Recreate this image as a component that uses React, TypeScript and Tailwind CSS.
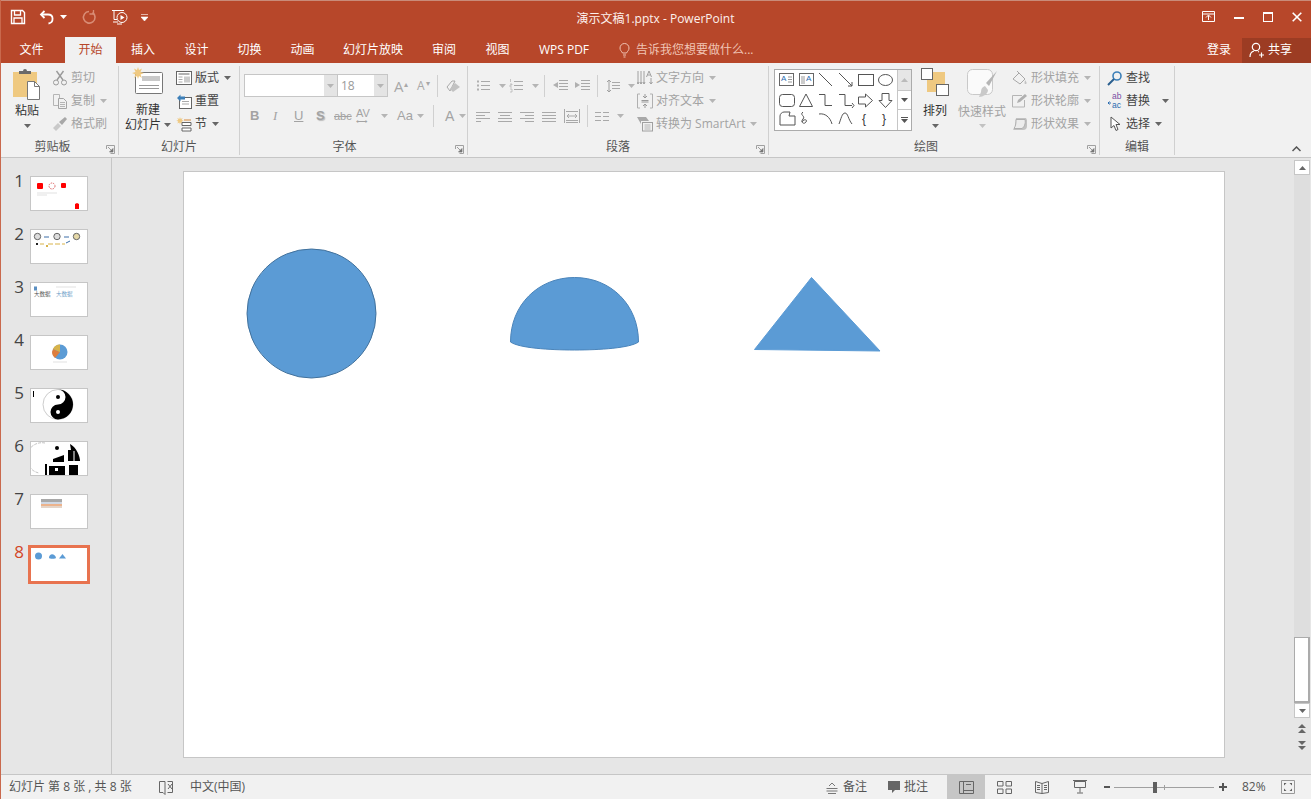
import type { ReactNode } from "react";

const GRAY = "#a9a9a9";
const DARK = "#5f5f5f";

function Caret({ color = "#666", className = "" }: { color?: string; className?: string }) {
  return (
    <svg width="7" height="4" viewBox="0 0 7 4" className={"shrink-0 " + className}>
      <path d="M0 0h7L3.5 4z" fill={color} />
    </svg>
  );
}

function Launcher() {
  return (
    <svg width="9" height="9" viewBox="0 0 9 9" className="shrink-0">
      <path d="M.5 4V.5H8.5V8.5H4.5" fill="none" stroke="#a0a0a0" />
      <path d="M2 2l4.5 4.5M7 3.5V7H3.5z" fill="#777" stroke="#777" strokeWidth=".7" />
    </svg>
  );
}

function Tab({ w, active, children }: { w: string; active?: boolean; children: ReactNode }) {
  return (
    <div
      className={
        w + " h-full flex items-center justify-center " + (active ? "bg-[#f1f1f1] text-[#b7472a]" : "text-white")
      }
    >
      {children}
    </div>
  );
}

function Group({ w, label, labelPad = "", launcher, children }: { w: string; label: string; labelPad?: string; launcher?: boolean; children: ReactNode }) {
  return (
    <div className={w + " shrink-0 h-[89px] mt-[3px] border-r border-[#d0d0d0] flex flex-col"}>
      <div className="flex h-[70px]">{children}</div>
      <div className={"flex-1 flex items-center relative justify-center text-[#555] pt-[3px] " + labelPad}>
        {label}
        {launcher && (
          <span className="absolute right-[3px] bottom-[1px]">
            <Launcher />
          </span>
        )}
      </div>
    </div>
  );
}

function Row({ icon, label, off, caret }: { icon: ReactNode; label: string; off?: boolean; caret?: boolean }) {
  return (
    <div className={"h-[23px] flex items-center whitespace-nowrap gap-[3px] " + (off ? "text-[#a3a3a3]" : "text-[#444]")}>
      {icon}
      <span>{label}</span>
      {caret && <Caret color={off ? "#b5b5b5" : "#666"} className="ml-[2px]" />}
    </div>
  );
}

function Ico({ w = 16, h = 16, children }: { w?: number; h?: number; children: ReactNode }) {
  return (
    <svg width={w} height={h} viewBox={"0 0 " + w + " " + h} fill="none" className="shrink-0">
      {children}
    </svg>
  );
}

function Lines({ ys, x1, x2, c = GRAY }: { ys: number[]; x1: number; x2: number; c?: string }) {
  return (
    <>
      {ys.map((y) => (
        <path key={y} d={"M" + x1 + " " + y + ".5H" + x2} stroke={c} />
      ))}
    </>
  );
}

function Sep() {
  return <div className="w-px h-[22px] bg-[#d0d0d0] shrink-0" />;
}

function Thumb({ n, selected, children }: { n: number; selected?: boolean; children: ReactNode }) {
  return (
    <div className={"flex items-start " + (selected ? "h-[39px] mt-[-2px]" : "h-[35px] mb-[18px]")}>
      <div className={"w-[27px] pr-[4px] text-right text-[17px] leading-[17px] " + (selected ? "text-[#d24726] mt-[-2px]" : "text-[#444] mt-[-4px]")}>
        {n}
      </div>
      <div className={selected ? "w-[62px] h-[39px] border-[3px] border-[#e8734f] bg-white" : "ml-[2px] w-[58px] h-[35px] border border-[#c6c6c6] bg-white"}>
        <svg width="56" height="33" viewBox="0 0 56 33" className="block">
          {children}
        </svg>
      </div>
    </div>
  );
}

export default function App() {
  return (
    <div className="h-screen w-full overflow-hidden flex flex-col bg-[#e6e6e6] border-l border-[#c9694d] text-[12px] leading-[16px] font-['Open_Sans','Noto_Sans_CJK_SC',sans-serif]">
      {/* title bar */}
      <div className="h-[37px] shrink-0 bg-[#b7472a] flex items-center text-white border-t border-[#c98b79]">
        <div className="w-[280px] flex items-center pl-[9px] mb-[4px]">
          <Ico w={16} h={16}>
            <path d="M1.5 1.5h11l2 2v11h-13z" stroke="#fff" strokeWidth="1.4" />
            <path d="M4.5 2v4h6V2M4 14v-5h8v5" stroke="#fff" strokeWidth="1.3" />
          </Ico>
          <div className="ml-[13px]">
            <Ico w={16} h={16}>
              <path d="M5.5 2L2 5.5 5.5 9" stroke="#fff" strokeWidth="1.8" />
              <path d="M2.5 5.5H9c6 0 6 8 .5 9" stroke="#fff" strokeWidth="1.8" />
            </Ico>
          </div>
          <Caret color="#fff" className="ml-[5px]" />
          <div className="ml-[14px]">
            <Ico w={16} h={16}>
              <path d="M11.5 3.5A5.8 5.8 0 1 1 8 2.5" stroke="#d98d76" strokeWidth="1.6" />
              <path d="M12.5 1v4h-4" stroke="#d98d76" strokeWidth="1.3" />
            </Ico>
          </div>
          <div className="ml-[15px]">
            <Ico w={17} h={17}>
              <path d="M0 1.5h12M2 1.5v9h3M6 13H1M5 15h5" stroke="#fff" />
              <circle cx="10" cy="8.5" r="5" stroke="#fff" />
              <path d="M8.5 6l4 2.5-4 2.5z" fill="#fff" />
            </Ico>
          </div>
          <svg width="7" height="7" viewBox="0 0 7 7" className="ml-[12px]">
            <path d="M0 .5h7M0 3h7L3.5 7z" stroke="#fff" strokeWidth=".6" fill="#fff" />
          </svg>
        </div>
        <div className="flex-1 text-center text-[#fdf1ed] pr-[172px] whitespace-nowrap">演示文稿1.pptx - PowerPoint</div>
        <div className="flex items-center mb-[5px] pr-[9px]">
          <Ico w={13} h={11}>
            <path d="M.5.5h12v10H.5zM.5 3h12" stroke="#fff" />
            <path d="M6.5 9V4.5M4 6.5l2.5-2.5L9 6.5" stroke="#fff" />
          </Ico>
          <div className="w-[10px] h-[2px] bg-white ml-[19px] mt-[3px]" />
          <div className="w-[10px] h-[10px] border border-white border-t-[2px] ml-[19px]" />
          <svg width="10" height="10" viewBox="0 0 10 10" className="ml-[19px]">
            <path d="M.7.7l8.6 8.6M9.3.7L.7 9.3" stroke="#fff" strokeWidth="1.6" />
          </svg>
        </div>
      </div>

      {/* tabs */}
      <div className="h-[26px] shrink-0 bg-[#b7472a] flex items-center text-white">
        <Tab w="w-[64px] pr-[3px]">文件</Tab>
        <Tab w="w-[51px]" active>开始</Tab>
        <Tab w="w-[54px]">插入</Tab>
        <Tab w="w-[53px]">设计</Tab>
        <Tab w="w-[53px]">切换</Tab>
        <Tab w="w-[53px]">动画</Tab>
        <Tab w="w-[88px]">幻灯片放映</Tab>
        <Tab w="w-[54px]">审阅</Tab>
        <Tab w="w-[53px]">视图</Tab>
        <Tab w="w-[80px]">WPS PDF</Tab>
        <div className="flex items-center ml-[15px] text-[#f0c4b4] whitespace-nowrap">
          <svg width="11" height="15" viewBox="0 0 11 15" fill="none" className="mr-[6px]">
            <path d="M3.5 10C2.5 8 1 7.5 1 5a4.5 4.5 0 0 1 9 0c0 2.5-1.5 3-2.5 5zM4 12h3M4.5 14h2" stroke="#f0c4b4" />
          </svg>
          告诉我您想要做什么...
        </div>
        <div className="flex-1" />
        <div className="text-white mr-[11px]">登录</div>
        <div className="w-[69px] h-[25px] bg-[#9c3c23] flex items-center pl-[7px] gap-[3px] text-white">
          <Ico w={16} h={16}>
            <circle cx="7" cy="5" r="3.7" stroke="#fff" strokeWidth="1.2" />
            <path d="M1 15c0-4 2-5.5 4-6M9 9.5l1 .5M10 13h5M12.5 10.5v5" stroke="#fff" strokeWidth="1.2" />
          </Ico>
          共享
        </div>
      </div>

      {/* ribbon */}
      <div className="h-[95px] shrink-0 bg-[#f1f1f1] border-b border-[#c6c6c6] flex">
        <Group w="w-[118px]" label="剪贴板" labelPad="pr-[14px]" launcher>
          <div className="w-[52px] shrink-0 flex flex-col items-center pt-[2px] text-[#333]">
            <svg width="30" height="32" viewBox="0 0 30 32" fill="none">
              <rect x="1" y="4" width="24" height="25" fill="#efc981" />
              <path d="M7 6V3h4a2 2 0 0 1 4 0h4v3z" fill="#6a6a6a" />
              <path d="M15.5 13.5h7l5 5v13h-12z" fill="#fff" stroke="#777" />
              <path d="M22.5 13.5v5h5" stroke="#777" />
            </svg>
            <div className="mt-[3px] leading-[16px]">粘贴</div>
            <Caret className="mt-[5px]" />
          </div>
          <div className="flex flex-col ml-[-1px]">
            <Row
              off
              label="剪切"
              icon={
                <Ico>
                  <circle cx="4" cy="12.5" r="2.5" stroke="#9a9a9a" />
                  <circle cx="12" cy="12.5" r="2.5" stroke="#9a9a9a" />
                  <path d="M5 10L11.5 1M11 10L4.5 1" stroke="#9a9a9a" strokeWidth="1.4" />
                </Ico>
              }
            />
            <Row
              off
              label="复制"
              caret
              icon={
                <Ico>
                  <path d="M1.5 1.5h6v11h-6z" stroke="#b5b5b5" />
                  <path d="M6.5 5.5h5l3 3v7h-8z" fill="#f1f1f1" stroke="#a5a5a5" />
                  <path d="M8 9.5h5M8 11.5h5M8 13.5h5" stroke="#b5b5b5" />
                </Ico>
              }
            />
            <Row
              off
              label="格式刷"
              icon={
                <Ico>
                  <path d="M1 12l5-5 3 3-5 5z" fill="#c9c9c9" />
                  <path d="M7 6l6-5 2 2-5 6z" fill="#a8a8a8" />
                </Ico>
              }
            />
          </div>
        </Group>

        <Group w="w-[121px]" label="幻灯片">
          <div className="w-[54px] shrink-0 flex flex-col items-center text-[#333] pl-[4px] whitespace-nowrap">
            <svg width="32" height="28" viewBox="0 0 32 28" fill="none" className="mt-[1px]">
              <rect x="3.5" y="5.5" width="27" height="21" rx="1" fill="#fff" stroke="#777" />
              <rect x="10" y="9" width="18" height="5" fill="#c9c9c9" />
              <path d="M7 18.5h20M7 21.5h20" stroke="#999" />
              <path d="M6 0l1 3 3-1.5L8.5 5 12 6 8.5 7.5 10 11 7 9l-1 3-1-3-3 2 1.500-3.500L0 6l3.500-1L2 1.500 5 3z" fill="#efc981" />
            </svg>
            <div className="mt-[8px] leading-[14px]">新建</div>
            <div className="flex items-center leading-[15px] gap-[3px]">
              幻灯片
              <Caret />
            </div>
          </div>
          <div className="flex flex-col ml-[3px]">
            <Row
              label="版式"
              caret
              icon={
                <Ico>
                  <rect x=".5" y="1.5" width="15" height="13" fill="#fff" stroke="#666" />
                  <path d="M2.5 4h11" stroke="#999" strokeWidth="1.5" />
                  <path d="M2.5 7h4M2.5 9.5h4M2.5 12h4" stroke="#aaa" />
                  <rect x="8" y="6.5" width="6" height="6" fill="#ccc" />
                </Ico>
              }
            />
            <Row
              label="重置"
              icon={
                <Ico>
                  <rect x="3.5" y="4.5" width="12" height="11" fill="#fff" stroke="#666" />
                  <path d="M6 8.5h7M6 11h7" stroke="#aaa" />
                  <path d="M1 5l3.5-3.5v2H9v3H4.5v2z" fill="#3c7fb8" />
                </Ico>
              }
            />
            <Row
              label="节"
              caret
              icon={
                <Ico>
                  <path d="M4 1l.7 2 2-1-1 2 2 .7-2 .7 1 2-2-1L4 8.5l-.7-2-2 1 1-2-2-.7 2-.7-1-2 2 1z" fill="#efc981" />
                  <path d="M6 6.5h9v3H6zM6 12h9v3H6z" fill="#fff" stroke="#666" />
                  <path d="M8 4h7" stroke="#d98a3a" />
                </Ico>
              }
            />
          </div>
        </Group>

        <Group w="w-[228px]" label="字体" labelPad="pr-[18px]" launcher>
          <div className="flex flex-col pl-[4px] w-full">
            <div className="flex items-center h-[25px] mt-[7px]">
              <div className="w-[94px] h-[23px] bg-white border border-[#c6c6c6] flex justify-end">
                <div className="w-[13px] bg-[#e4e4e4] flex items-center justify-center">
                  <Caret color="#b5b5b5" />
                </div>
              </div>
              <div className="w-[50px] h-[23px] bg-white border border-l-0 border-[#c6c6c6] flex items-center pl-[3px] text-[#9a9a9a]">
                <span className="flex-1">18</span>
                <div className="w-[13px] h-full bg-[#e4e4e4] flex items-center justify-center">
                  <Caret color="#b5b5b5" />
                </div>
              </div>
              <div className="ml-[6px] flex items-center gap-[9px] text-[#a8a8a8] text-[15px]">
                <span className="relative w-[14px]">A<span className="absolute left-[10px] top-[-2px] text-[8px]">▴</span></span>
                <span className="relative w-[14px] text-[12px]">A<span className="absolute left-[9px] top-[-3px] text-[8px]">▾</span></span>
              </div>
              <div className="ml-[6px]"><Sep /></div>
              <div className="ml-[7px]">
                <Ico>
                  <path d="M2 9l5-6h3l-5 10z" fill="none" stroke={GRAY} />
                  <path d="M8 14l-3-3 5-6 5 4z" fill="#c2c2c2" />
                </Ico>
              </div>
            </div>
            <div className="flex items-center h-[24px] mt-[6px] text-[#a3a3a3] font-['Liberation_Sans']">
              <span className="w-[22px] pl-[6px] font-bold text-[13px]">B</span>
              <span className="w-[22px] pl-[7px] italic text-[13px] font-['Liberation_Serif']">I</span>
              <span className="w-[23px] pl-[6px] underline text-[13px]">U</span>
              <span className="w-[21px] pl-[5px] font-bold text-[13px] [text-shadow:1px_1px_1px_#bbb]">S</span>
              <span className="w-[23px] pl-[2px] line-through text-[11px]">abc</span>
              <span className="w-[26px] pl-[1px] text-[11px] leading-[10px] flex flex-col">
                AV
                <span className="text-[8px] leading-[7px]">⟷</span>
              </span>
              <Caret color="#b5b5b5" />
              <span className="ml-[9px] text-[13px]">Aa</span>
              <Caret color="#b5b5b5" className="ml-[4px]" />
              <div className="ml-[9px]"><Sep /></div>
              <span className="ml-[11px] text-[14px]">A</span>
              <Caret color="#b5b5b5" className="ml-[5px]" />
            </div>
          </div>
        </Group>

        <Group w="w-[301px]" label="段落" launcher>
          <div className="w-[169px] shrink-0 pl-[8px] flex flex-col">
            <div className="flex items-center h-[25px] mt-[7px]">
              <Ico w={15} h={15}>
                <Lines ys={[3, 7, 11]} x1={5} x2={14} />
                <path d="M1 2.5h2v2H1zM1 6.5h2v2H1zM1 10.5h2v2H1z" fill="#b0b0b0" />
              </Ico>
              <Caret color="#b5b5b5" className="ml-[8px]" />
              <div className="ml-[3px]">
                <Ico w={15} h={15}>
                  <Lines ys={[3, 7, 11]} x1={5} x2={14} />
                  <path d="M1.5 1v3M1 6h2v1H1v2h2M1 11h2v3H1" stroke="#b0b0b0" strokeWidth=".7" />
                </Ico>
              </div>
              <Caret color="#b5b5b5" className="ml-[8px]" />
              <div className="ml-[5px]"><Sep /></div>
              <div className="ml-[7px]">
                <Ico w={17} h={15}>
                  <Lines ys={[2, 5, 8, 11]} x1={7} x2={16} />
                  <path d="M6 4v6L1 7z" fill="#b0b0b0" />
                </Ico>
              </div>
              <div className="ml-[5px]">
                <Ico w={17} h={15}>
                  <Lines ys={[2, 5, 8, 11]} x1={7} x2={16} />
                  <path d="M1 4v6l5-3z" fill="#b0b0b0" />
                </Ico>
              </div>
              <div className="ml-[6px]"><Sep /></div>
              <div className="ml-[8px]">
                <Ico w={15} h={16}>
                  <Lines ys={[4, 7, 10]} x1={6} x2={14} />
                  <path d="M3 2v12M1 4l2-2 2 2M1 12l2 2 2-2" stroke="#a0a0a0" />
                </Ico>
              </div>
              <Caret color="#b5b5b5" className="ml-[7px]" />
            </div>
            <div className="flex items-center h-[24px] mt-[6px] gap-[7px]">
              <Ico w={15} h={11}><Lines ys={[1, 4, 7, 10]} x1={0} x2={14} /><path d="M9 4.500h6M5 10.500h10" stroke="#f1f1f1" /></Ico>
              <Ico w={15} h={11}><Lines ys={[1, 4, 7, 10]} x1={0} x2={14} /><path d="M0 4.500h2M12 4.500h2" stroke="#f1f1f1" /></Ico>
              <Ico w={15} h={11}><Lines ys={[1, 4, 7, 10]} x1={0} x2={14} /><path d="M0 4.500h5M0 10.500h5" stroke="#f1f1f1" /></Ico>
              <Ico w={15} h={11}><Lines ys={[1, 4, 7, 10]} x1={0} x2={14} /></Ico>
              <Ico w={16} h={16}>
                <path d="M.5 1v14M15.500 1v14M2 3.500h12M2 12.500h12M2 14.500h12M3 8h10M5 6L3 8l2 2M11 6l2 2-2 2" stroke="#a8a8a8" />
              </Ico>
              <Sep />
              <Ico w={15} h={11}><Lines ys={[1, 5, 9]} x1={0} x2={6} /><Lines ys={[1, 5, 9]} x1={8} x2={14} /></Ico>
              <Caret color="#b5b5b5" />
            </div>
          </div>
          <div className="flex flex-col">
            <Row
              off
              label="文字方向"
              caret
              icon={
                <Ico>
                  <path d="M1 1v13M4 1v13M7 1v13M0 12l1 2 1-2M3 12l1 2 1-2M6 12l1 2 1-2M14 8v6M12.500 12l1.500 2 1.500-2" stroke="#a0a0a0" />
                  <path d="M9.500 7l2.500-6 2.500 6M10.500 5h3" stroke="#a0a0a0" />
                </Ico>
              }
            />
            <Row
              off
              label="对齐文本"
              caret
              icon={
                <Ico>
                  <path d="M3 1H.5v14H3M13 1h2.500v14H13" stroke="#b0b0b0" />
                  <path d="M8 1v3.500M8 11.500V15M6 3l2 2 2-2M6 13l2-2 2 2M4.500 7.500h7M4.500 9h7" stroke="#999" />
                </Ico>
              }
            />
            <Row
              off
              label="转换为 SmartArt"
              caret
              icon={
                <Ico>
                  <path d="M0 1h9l3 4H4v3z" fill="#a8a8a8" />
                  <rect x="5.500" y="6.500" width="10" height="8.500" fill="#f1f1f1" stroke="#a0a0a0" />
                  <path d="M7.500 9h6M7.500 11h6M7.500 13h6" stroke="#b5b5b5" />
                </Ico>
              }
            />
          </div>
        </Group>

        <Group w="w-[331px]" label="绘图" labelPad="pr-[16px]" launcher>
          <div className="ml-[5px] mt-[3px] w-[138px] shrink-0 h-[62px] border border-[#ababab] bg-white flex">
            <svg width="122" height="60" viewBox="774 70 122 60" fill="none" className="shrink-0" stroke="#555">
              <rect x="778.500" y="73.500" width="14" height="12" stroke="#666" />
              <text x="780" y="81" fontSize="8" fill="#2b6cb0" stroke="none" fontFamily="Liberation Sans">A</text>
              <path d="M787 77h4M787 79.500h4M787 82h4" stroke="#999" />
              <rect x="798.500" y="73.500" width="14" height="12" stroke="#666" />
              <text x="805" y="81" fontSize="8" fill="#2b6cb0" stroke="none" fontFamily="Liberation Sans">A</text>
              <path d="M801 76v8M803 76v8" stroke="#999" />
              <path d="M818 73l13 13M838 73l13 13M851 86v-4M851 86h-4" />
              <rect x="857.500" y="74.500" width="15" height="11" />
              <ellipse cx="884.500" cy="80" rx="7" ry="5.500" />
              <rect x="778.500" y="94.500" width="15" height="12" rx="3" />
              <path d="M805 94l6.500 12.500h-13zM818 94.500h6v11h7M838 94.500h6v11h7M851 103l2 2.500-2 2.500" />
              <path d="M857.500 97h7v-3l7 6.500-7 6.500v-3h-7zM881 93.500h7v7h3l-6.500 7-6.500-7h3z" />
              <path d="M779 116c0-2 2-4 4-4h6l-1 4h6v9h-15z" />
              <path d="M802 112c-4 3 3 4 0 7-3 3 1 6 3 3s-3-3-4 0" />
              <path d="M818 114c6-1 11 3 13 10M838 124c2-5 3-11 6-11s3 6 7 11" />
              <text x="861" y="123" fontSize="12" fill="#333" stroke="none" fontFamily="Liberation Sans">{"{"}</text>
              <text x="881" y="123" fontSize="12" fill="#333" stroke="none" fontFamily="Liberation Sans">{"}"}</text>
            </svg>
            <div className="flex-1 border-l border-[#c6c6c6] flex flex-col">
              <div className="h-[20px] bg-[#e6e6e6] flex items-center justify-center">
                <svg width="7" height="4" viewBox="0 0 7 4"><path d="M0 4h7L3.500 0z" fill="#bbb" /></svg>
              </div>
              <div className="h-[20px] border-y border-[#c6c6c6] flex items-center justify-center">
                <Caret color="#555" />
              </div>
              <div className="flex-1 flex flex-col items-center justify-center gap-[1px]">
                <div className="w-[7px] h-px bg-[#555]" />
                <Caret color="#555" />
              </div>
            </div>
          </div>
          <div className="w-[42px] shrink-0 ml-[2px] flex flex-col items-center text-[#333] pt-[2px]">
            <svg width="28" height="28" viewBox="0 0 28 28" fill="none">
              <rect x="6" y="4" width="18" height="20" fill="#efc981" />
              <rect x=".5" y=".5" width="11" height="11" fill="#fff" stroke="#666" />
              <rect x="15.500" y="16.500" width="12" height="11" fill="#fff" stroke="#666" />
            </svg>
            <div className="mt-[7px] leading-[16px]">排列</div>
            <Caret className="mt-[5px]" />
          </div>
          <div className="w-[52px] shrink-0 flex flex-col items-center text-[#a3a3a3] pt-[2px] whitespace-nowrap">
            <svg width="31" height="30" viewBox="0 0 31 30" fill="none">
              <rect x=".5" y="1.500" width="25" height="25" rx="5" fill="#fafafa" stroke="#c9c9c9" />
              <path d="M30 3L19 15l3 3z" fill="#b5b5b5" />
              <path d="M12 29c4 0 9-3 9-7l-3-4c-3 1-4 3-4 6z" fill="#c9c9c9" />
            </svg>
            <div className="mt-[6px] leading-[16px]">快速样式</div>
            <Caret color="#c2c2c2" className="mt-[4px]" />
          </div>
          <div className="flex flex-col ml-[4px]">
            <Row
              off
              label="形状填充"
              caret
              icon={
                <Ico>
                  <path d="M1 9l6-6 6 6-5 5z" fill="#f1f1f1" stroke="#a8a8a8" />
                  <path d="M5 1l3 3" stroke="#a8a8a8" />
                  <path d="M13 10c1 1.500 2 2.500 1.500 3.500s-2 .5-2-.5.500-2 .5-3z" fill="#c2c2c2" />
                </Ico>
              }
            />
            <Row
              off
              label="形状轮廓"
              caret
              icon={
                <Ico>
                  <path d="M10 2.500H.5V14h12V7" stroke="#b5b5b5" />
                  <path d="M5 10l1-3 7-6 2 2-7 6z" fill="#b0b0b0" />
                </Ico>
              }
            />
            <Row
              off
              label="形状效果"
              caret
              icon={
                <Ico>
                  <path d="M4 2h10l1 2v6a4 4 0 0 1-4 4H1l2-3z" fill="#c2c2c2" />
                  <path d="M4 3.500h9c1 4-1 8-3 9H2c2-3 2-6 2-9z" fill="#ececec" stroke="#b0b0b0" />
                </Ico>
              }
            />
          </div>
        </Group>

        <Group w="w-[75px]" label="编辑">
          <div className="flex flex-col pl-[7px] w-full">
            <Row
              label="查找"
              icon={
                <Ico>
                  <circle cx="10" cy="6" r="4" stroke="#3c7fb8" strokeWidth="1.6" />
                  <path d="M7 9l-6 6" stroke="#2a5f8f" strokeWidth="2" />
                </Ico>
              }
            />
            <div className="h-[23px] flex items-center gap-[3px] text-[#444]">
              <svg width="16" height="17" viewBox="0 0 16 17" className="shrink-0" fontFamily="Liberation Sans" fontSize="8.5">
                <text x="5" y="7" fill="#7a4fa3">ab</text>
                <text x="5" y="16" fill="#2b6cb0">ac</text>
                <path d="M4 11H1M2.500 9.500L1 11l1.500 1.500" stroke="#2b6cb0" fill="none" />
              </svg>
              <span>替换</span>
              <Caret className="ml-[9px]" />
            </div>
            <Row
              label="选择"
              caret
              icon={
                <Ico>
                  <path d="M4 1v11l3-2.500 2 5 2-1-2-5h4z" fill="#fff" stroke="#555" />
                </Ico>
              }
            />
          </div>
        </Group>

        <div className="flex-1 flex items-end justify-end pr-[10px] pb-[5px]">
          <svg width="9" height="6" viewBox="0 0 9 6" fill="none">
            <path d="M.5 5l4-4 4 4" stroke="#555" strokeWidth="1.5" />
          </svg>
        </div>
      </div>

      {/* main */}
      <div className="flex-1 min-h-0 flex">
        <div className="w-[111px] shrink-0 border-r border-[#c6c6c6] pt-[18px]">
          <Thumb n={1}>
            <rect x="6" y="6" width="6" height="6" rx="1" fill="#f00" />
            <circle cx="21" cy="9" r="3" stroke="#d66" strokeDasharray="1.5 1" fill="none" />
            <rect x="30" y="6" width="5" height="5" rx="1" fill="#f00" />
            <path d="M6 16h20M6 18h10" stroke="#ccc" strokeWidth=".6" />
            <path d="M44 26v-5l2-1 2 1v5z" fill="#f00" transform="translate(0 6)" />
          </Thumb>
          <Thumb n={2}>
            <circle cx="6.5" cy="6.5" r="3.2" fill="#ddd" stroke="#666" />
            <circle cx="26" cy="6.5" r="3.2" fill="#ddd" stroke="#666" />
            <circle cx="45.5" cy="6.5" r="3.2" fill="#e6d9a8" stroke="#666" />
            <path d="M13 7h5M33 7h5M35 13l4-2" stroke="#3c6ea8" />
            <path d="M5 14h2M9 14h4M17 14h5M24 14h5M31 14h3" stroke="#d8b34a" />
            <rect x="5" y="13" width="2" height="2" fill="#222" />
            <rect x="15" y="15" width="2" height="2" fill="#d8b34a" />
          </Thumb>
          <Thumb n={3}>
            <rect x="3" y="3.5" width="3" height="4" fill="#5b8fc2" />
            <path d="M25 4h20" stroke="#ccc" strokeWidth=".6" />
            <text x="3" y="13" fontSize="5.5" fill="#555">大数据</text>
            <text x="25" y="13" fontSize="5.5" fill="#6fa0c8">大数据</text>
          </Thumb>
          <Thumb n={4}>
            <circle cx="29" cy="16" r="7.5" fill="#5b9bd5" />
            <path d="M29 16L24 22A7.5 7.5 0 0 1 22 13z" fill="#dd7e3e" />
            <path d="M29 16L22 13A7.5 7.5 0 0 1 29 8.5z" fill="#d8b34a" />
            <path d="M22 26h14" stroke="#ccc" strokeWidth=".6" />
          </Thumb>
          <Thumb n={5}>
            <circle cx="27" cy="15.5" r="15" fill="#fff" stroke="#999" strokeWidth=".5" />
            <path d="M27 .5a15 15 0 0 1 0 30 7.5 7.5 0 0 1 0-15 7.5 7.5 0 0 0 0-15z" fill="#000" />
            <circle cx="27" cy="8" r="2" fill="#000" />
            <circle cx="27" cy="23" r="2" fill="#fff" />
            <rect x="2" y="2" width="1" height="6" fill="#000" />
          </Thumb>
          <Thumb n={6}>
            <path d="M14 1A15 15 0 0 0 8 31" stroke="#999" strokeWidth=".6" strokeDasharray="3 1" fill="none" />
            <circle cx="26" cy="6" r="2" fill="#000" />
            <path d="M22 17l11-4v7H22z" fill="#000" />
            <path d="M39 2c4 2 9 8 10 16v1h-12V8h3z" fill="#000" />
            <rect x="18" y="24" width="16" height="9" fill="#000" />
            <rect x="24" y="26" width="3" height="3" fill="#fff" />
            <rect x="38" y="23" width="9" height="10" fill="#000" />
            <path d="M43 9v12" stroke="#fff" />
            <rect x="14" y="22" width="2" height="11" fill="#000" />
          </Thumb>
          <Thumb n={7}>
            <rect x="10" y="4" width="21" height="3" fill="#a8a8a8" />
            <rect x="10" y="7" width="21" height="2" fill="#d0d8e4" />
            <rect x="10" y="9" width="21" height="2" fill="#ecb38c" />
            <rect x="10" y="11" width="21" height="2" fill="#e4d4c8" />
          </Thumb>
          <Thumb n={8} selected>
            <circle cx="7.5" cy="8" r="3.5" fill="#5b9bd5" />
            <path d="M18 10c0-5 6-5 7 0 0 1-7 1-7 0z" fill="#5b9bd5" />
            <path d="M31.5 6l3.5 4.5h-7z" fill="#5b9bd5" />
          </Thumb>
        </div>

        <div className="flex-1 min-w-0 flex">
          <div className="flex-1 min-w-0 pl-[71px] pt-[13px]">
            <div className="w-[1042px] h-[587px] bg-white border border-[#c6c6c6]">
              <svg width="1040" height="585" viewBox="184 172 1040 585" className="block">
                <circle cx="311.5" cy="313.5" r="64.5" fill="#5b9bd5" stroke="#41719c" />
                <path
                  d="M510.5 342C510.5 305 538 277.5 574.5 277.5S638.5 305 638.5 342C630 348 600 350 574.5 350S519 348 510.5 342Z"
                  fill="#5b9bd5"
                  stroke="#4a84ba"
                />
                <path d="M811.5 277.5L880 351 754.5 349.5Z" fill="#5b9bd5" stroke="#5b9bd5" />
              </svg>
            </div>
          </div>
          <div className="w-[17px] shrink-0 pr-px pt-[2px] flex flex-col items-stretch">
            <div className="h-[15px] bg-white border border-[#c6c6c6] flex items-center justify-center">
              <svg width="7" height="4" viewBox="0 0 7 4"><path d="M0 4h7L3.5 0z" fill="#666" /></svg>
            </div>
            <div className="h-[462px] bg-[#dedede]" />
            <div className="h-[66px] bg-white border-2 border-[#ababab] border-t-[1px] border-l-[1px]" />
            <div className="h-[15px] bg-white border border-[#c6c6c6] flex items-center justify-center">
              <Caret />
            </div>
            <div className="flex flex-col items-center mt-[6px] gap-[6px]">
              <svg width="8" height="10" viewBox="0 0 8 10"><path d="M0 4l4-4 4 4zM0 9l4-4 4 4z" fill="#666" /></svg>
              <svg width="8" height="10" viewBox="0 0 8 10"><path d="M0 1h8L4 5zM0 6h8l-4 4z" fill="#666" /></svg>
            </div>
          </div>
        </div>
      </div>

      {/* status bar */}
      <div className="h-[25px] shrink-0 bg-[#f1f1f1] border-t border-[#c6c6c6] flex items-center text-[#555] whitespace-nowrap">
        <div className="pl-[8px] w-[157px]">幻灯片 第 8 张 , 共 8 张</div>
        <Ico w={16} h={15}>
          <path d="M7 1.5H1.5v11H5l2 2V1.5zM9.5 1.5h5v11h-5" stroke="#666" />
          <path d="M10 4l4 5M14 4l-4 5" stroke="#666" />
        </Ico>
        <div className="ml-[16px]">中文(中国)</div>
        <div className="flex-1" />
        <div className="flex items-center gap-[5px] mr-[21px]">
          <Ico w={12} h={14}>
            <path d="M.5 8.5h11M.5 11h11M2 13.5h8M3 6l3-3 3 3" stroke="#777" />
          </Ico>
          备注
        </div>
        <div className="flex items-center gap-[4px] mr-[19px]">
          <svg width="12" height="13" viewBox="0 0 12 13"><path d="M0 0h12v9H7l-3 3V9H0z" fill="#666" /></svg>
          批注
        </div>
        <div className="w-[38px] h-full bg-[#c6c6c6] flex items-center justify-center">
          <Ico w={15} h={13}>
            <path d="M.5.5h14v12H.5zM4.5.5v12M4.5 9.5h10M7 3.5h5" stroke="#666" />
          </Ico>
        </div>
        <div className="w-[38px] flex items-center justify-center">
          <Ico w={15} h={13}>
            <path d="M.5.5H6V5H.5zM9 .5h5.5V5H9zM.5 8H6v4.500H.5zM9 8h5.500v4.500H9z" stroke="#666" />
          </Ico>
        </div>
        <div className="w-[38px] flex items-center justify-center">
          <Ico w={14} h={13}>
            <path d="M.5.5l6.5 2 6.5-2v11l-6.5 1-6.5-1zM7 2.5v10M2 4.500h3M2 6.500h3M2 8.500h3M9 4.500h3M9 6.500h3M9 8.500h3" stroke="#666" />
          </Ico>
        </div>
        <div className="w-[38px] flex items-center justify-center">
          <Ico w={14} h={14}>
            <path d="M0 .5h14M1.5.5v1h11v-1M1.5 1.500v6h11v-6M7 7.500v5M4 13h6" stroke="#666" />
          </Ico>
        </div>
        <div className="w-[6px] h-[2px] bg-[#555] ml-[5px]" />
        <div className="w-[100px] h-[11px] ml-[4px] mr-px flex items-center relative">
          <div className="w-full h-px bg-[#a0a0a0]" />
          <div className="absolute left-[39px] top-0 w-[4px] h-[11px] bg-[#5f5f5f]" />
          <div className="absolute left-[50px] top-[3px] w-px h-[5px] bg-[#a0a0a0]" />
        </div>
        <div className="ml-[4px] w-[8px] h-[8px] relative">
          <div className="absolute left-0 top-[3px] w-[8px] h-[2px] bg-[#555]" />
          <div className="absolute left-[3px] top-0 w-[2px] h-[8px] bg-[#555]" />
        </div>
        <div className="ml-[15px] w-[39px]">82%</div>
        <div className="mr-[16px]">
          <Ico w={14} h={14}>
            <path d="M.5.5h13v13H.5z" stroke="#999" />
            <path d="M3 3l2.500 0-2.500 2.500zM11 3v2.500L8.500 3zM3 11v-2.500L5.500 11zM11 11H8.500L11 8.500z" fill={DARK} />
          </Ico>
        </div>
      </div>
    </div>
  );
}
